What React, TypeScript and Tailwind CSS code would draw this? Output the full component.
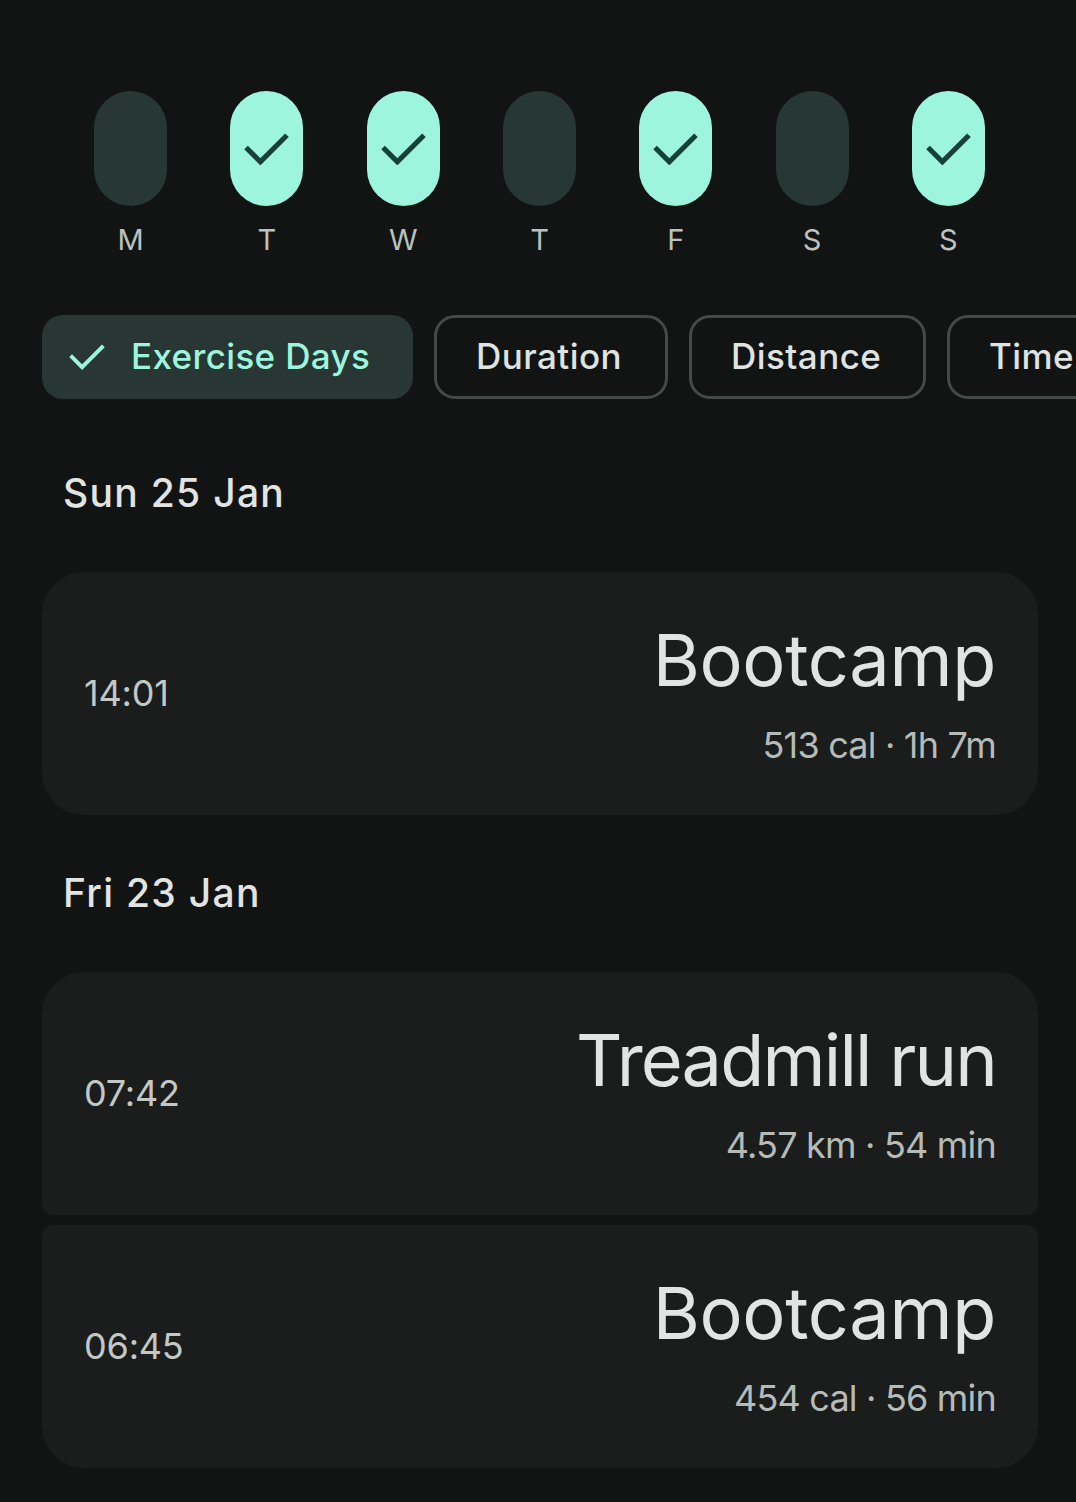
const days = [
  { l: "M", on: false },
  { l: "T", on: true },
  { l: "W", on: true },
  { l: "T", on: false },
  { l: "F", on: true },
  { l: "S", on: false },
  { l: "S", on: true },
];

function Check({ className, sw }: { className: string; sw: string }) {
  return (
    <svg viewBox="0 0 44 32" fill="none" className={className}>
      <path d="M2 15 L16 29 L42 3" stroke="currentColor" strokeWidth={sw} />
    </svg>
  );
}

function Chip({ label, w }: { label: string; w: string }) {
  return (
    <div className={`${w} h-[84px] shrink-0 rounded-[21px] border-[3px] border-[#454a48] flex items-center pl-[39px] pb-[2px] text-[35px] font-medium tracking-[0.45px] text-[#dfe3e1] whitespace-nowrap`}>
      {label}
    </div>
  );
}

function Card({ time, title, sub, radius, track }: { time: string; title: string; sub: string; radius: string; track: string }) {
  return (
    <div className={`${radius} ml-[42px] w-[996px] h-[243px] bg-[#1b1d1d] pl-[42px] pr-[42px] pb-[2px] flex items-center justify-between`}>
      <div className="text-[36px] text-[#c2c8c5] leading-none tracking-[-0.2px]">{time}</div>
      <div className="flex flex-col items-end">
        <div className={`${track} text-[72px] font-normal leading-[84px] text-[#e2e4e3]`}>{title}</div>
        <div className="mt-[21px] text-[36px] leading-[44px] tracking-[-0.8px] text-[#b5bbb8]">{sub}</div>
      </div>
    </div>
  );
}

function DateHead({ text, mt }: { text: string; mt: string }) {
  return (
    <div className={`${mt} mb-[58px] pl-[63px] h-[44px] flex items-center text-[39px] font-medium tracking-[1.3px] text-[#e2e4e3] leading-none`}>
      {text}
    </div>
  );
}

export default function App() {
  return (
    <div className="w-[1076px] h-[1502px] overflow-hidden bg-[#111413] pt-[91px] font-['Inter',sans-serif]">
      <div className="grid grid-cols-7 w-[954px] ml-[62.5px]">
        {days.map((d, i) => (
          <div key={i} className="flex flex-col items-center">
            <div className={`w-[73px] h-[115px] rounded-full flex items-center justify-center ${d.on ? "bg-[#9df5de] text-[#17403a]" : "bg-[#263734]"}`}>
              {d.on && <Check className="w-[45px] h-[33px]" sw="5" />}
            </div>
            <div className="mt-[18px] text-[29px] leading-[32px] text-[#bcc2bf]">{d.l}</div>
          </div>
        ))}
      </div>
      <div className="mt-[59px] ml-[42px] flex gap-[21px] overflow-hidden">
        <div className="w-[371px] h-[84px] shrink-0 rounded-[21px] bg-[#283734] flex items-center pl-[27px] pb-[1px] text-[#9df5de] text-[35px] font-medium tracking-[0.35px] whitespace-nowrap">
          <Check className="w-[36px] h-[27px] mr-[26px]" sw="4.8" />
          Exercise Days
        </div>
        <Chip label="Duration" w="w-[234px]" />
        <Chip label="Distance" w="w-[237px]" />
        <Chip label="Time" w="w-[200px]" />
      </div>
      <DateHead text="Sun 25 Jan" mt="mt-[71px]" />
      <Card time="14:01" title="Bootcamp" track="tracking-[-0.3px]" sub="513 cal · 1h 7m" radius="rounded-[42px]" />
      <DateHead text="Fri 23 Jan" mt="mt-[55px]" />
      <Card time="07:42" title="Treadmill run" track="tracking-[-1.8px]" sub="4.57 km · 54 min" radius="rounded-t-[42px] rounded-b-[10px]" />
      <div className="h-[10px]" />
      <Card time="06:45" title="Bootcamp" track="tracking-[-0.3px]" sub="454 cal · 56 min" radius="rounded-b-[42px] rounded-t-[10px]" />
    </div>
  );
}
